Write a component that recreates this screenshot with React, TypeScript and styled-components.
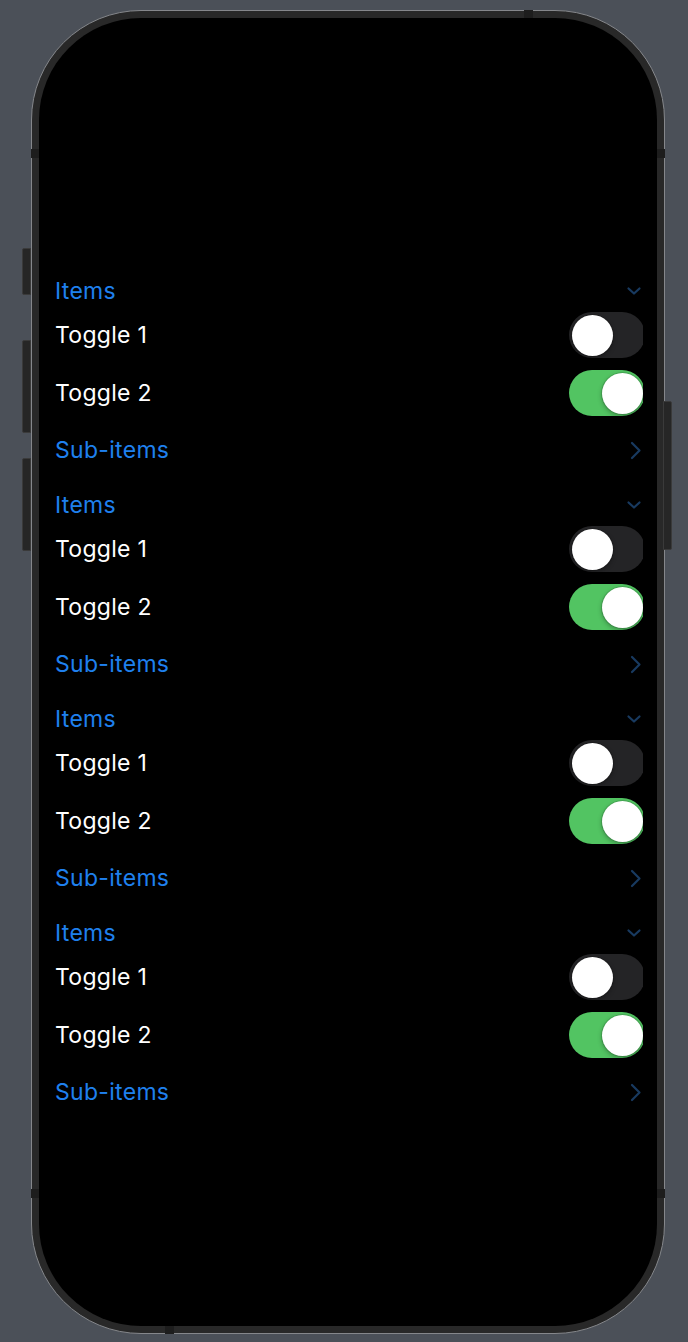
import React from "react";
import styled, { createGlobalStyle } from "styled-components";

const GlobalStyle = createGlobalStyle`
  html, body {
    margin: 0;
    padding: 0;
    background: #4b5058;
  }
  * {
    box-sizing: border-box;
  }
`;

const Stage = styled.div`
  width: 688px;
  height: 1342px;
  padding: 10px 0 0 31px;
  background: #4b5058;
  font-family: Inter, "Noto Sans", "Liberation Sans", sans-serif;
`;

const Phone = styled.div`
  position: relative;
  width: 634px;
  height: 1324px;
  padding: 7px;
  border: 1px solid #85878b;
  border-radius: 110px;
  background: #282828;
`;

interface SideButtonProps {
  side: "left" | "right";
  top: number;
  length: number;
}
const SideButton = styled.span<SideButtonProps>`
  position: absolute;
  ${(p) => (p.side === "left" ? "left: -10px;" : "right: -8px;")}
  top: ${(p) => p.top}px;
  width: 9px;
  height: ${(p) => p.length}px;
  background: #262626;
  border: 1px solid #3a3a3a;
  border-radius: ${(p) => (p.side === "left" ? "2px 0 0 2px" : "0 2px 2px 0")};
`;

interface BandProps {
  vertical?: boolean;
  at: string;
}
const Band = styled.span<BandProps>`
  position: absolute;
  background: #1d1d1d;
  ${(p) =>
    p.vertical
      ? `width: 8px; height: 9px; ${p.at}`
      : `width: 9px; height: 8px; ${p.at}`}
`;

const Screen = styled.div`
  width: 100%;
  height: 100%;
  background: #000;
  border-radius: 102px;
  overflow: hidden;
  padding: 258px 14px 0 16px;
`;

const List = styled.div`
  display: flex;
  flex-direction: column;
  overflow: hidden;
`;

const Section = styled.section`
  display: flex;
  flex-direction: column;
  margin-bottom: 12px;
`;

interface RowProps {
  h: number;
}
const Row = styled.div<RowProps>`
  display: flex;
  align-items: center;
  justify-content: space-between;
  height: ${(p) => p.h}px;
`;

interface LabelProps {
  accent?: boolean;
}
const Label = styled.span<LabelProps>`
  font-size: 23px;
  line-height: 1;
  letter-spacing: 0.3px;
  color: ${(p) => (p.accent ? "#1f80ee" : "#ffffff")};
`;

const Chevron = styled.svg`
  display: block;
  margin-right: 1px;
  flex: none;
`;

interface SwitchProps {
  on: boolean;
}
const Track = styled.div<SwitchProps>`
  position: relative;
  flex: none;
  width: 76px;
  height: 46px;
  margin-right: -2px;
  border-radius: 23px;
  background: ${(p) => (p.on ? "#52c462" : "#242426")};
`;

const Knob = styled.span<SwitchProps>`
  position: absolute;
  top: 3px;
  ${(p) => (p.on ? "right: 2px;" : "left: 3px;")}
  width: 41px;
  height: 41px;
  border-radius: 50%;
  background: #fff;
  box-shadow: 0 0 0 1px rgba(0, 0, 0, 0.12), 0 2px 5px rgba(0, 0, 0, 0.3);
`;

const Switch = ({ on }: SwitchProps) => (
  <Track on={on}>
    <Knob on={on} />
  </Track>
);

const DownChevron = () => (
  <Chevron width="16" height="10" viewBox="0 0 16 10">
    <polyline
      points="2.5,2.5 8,7.5 13.5,2.5"
      fill="none"
      stroke="#183a60"
      strokeWidth="2.2"
      strokeLinecap="round"
      strokeLinejoin="round"
    />
  </Chevron>
);

const RightChevron = () => (
  <Chevron width="12" height="19" viewBox="0 0 12 19">
    <polyline
      points="2,2 9.5,9.5 2,17"
      fill="none"
      stroke="#183a60"
      strokeWidth="2.2"
      strokeLinecap="round"
      strokeLinejoin="round"
    />
  </Chevron>
);

const ItemsGroup = () => (
  <Section>
    <Row h={30}>
      <Label accent>Items</Label>
      <DownChevron />
    </Row>
    <Row h={58}>
      <Label>Toggle 1</Label>
      <Switch on={false} />
    </Row>
    <Row h={58}>
      <Label>Toggle 2</Label>
      <Switch on={true} />
    </Row>
    <Row h={56}>
      <Label accent>Sub-items</Label>
      <RightChevron />
    </Row>
  </Section>
);

const App = () => {
  return (
    <Stage>
      <GlobalStyle />
      <Phone>
        <SideButton side="left" top={237} length={47} />
        <SideButton side="left" top={329} length={93} />
        <SideButton side="left" top={447} length={93} />
        <SideButton side="right" top={390} length={149} />
        <Band vertical at="left: -1px; top: 138px;" />
        <Band vertical at="right: -1px; top: 138px;" />
        <Band vertical at="left: -1px; top: 1178px;" />
        <Band vertical at="right: -1px; top: 1178px;" />
        <Band at="top: -1px; left: 492px;" />
        <Band at="bottom: -1px; left: 133px;" />
        <Screen>
          <List>
            {[0, 1, 2, 3].map((i) => (
              <ItemsGroup key={i} />
            ))}
          </List>
        </Screen>
      </Phone>
    </Stage>
  );
};

export default App;
